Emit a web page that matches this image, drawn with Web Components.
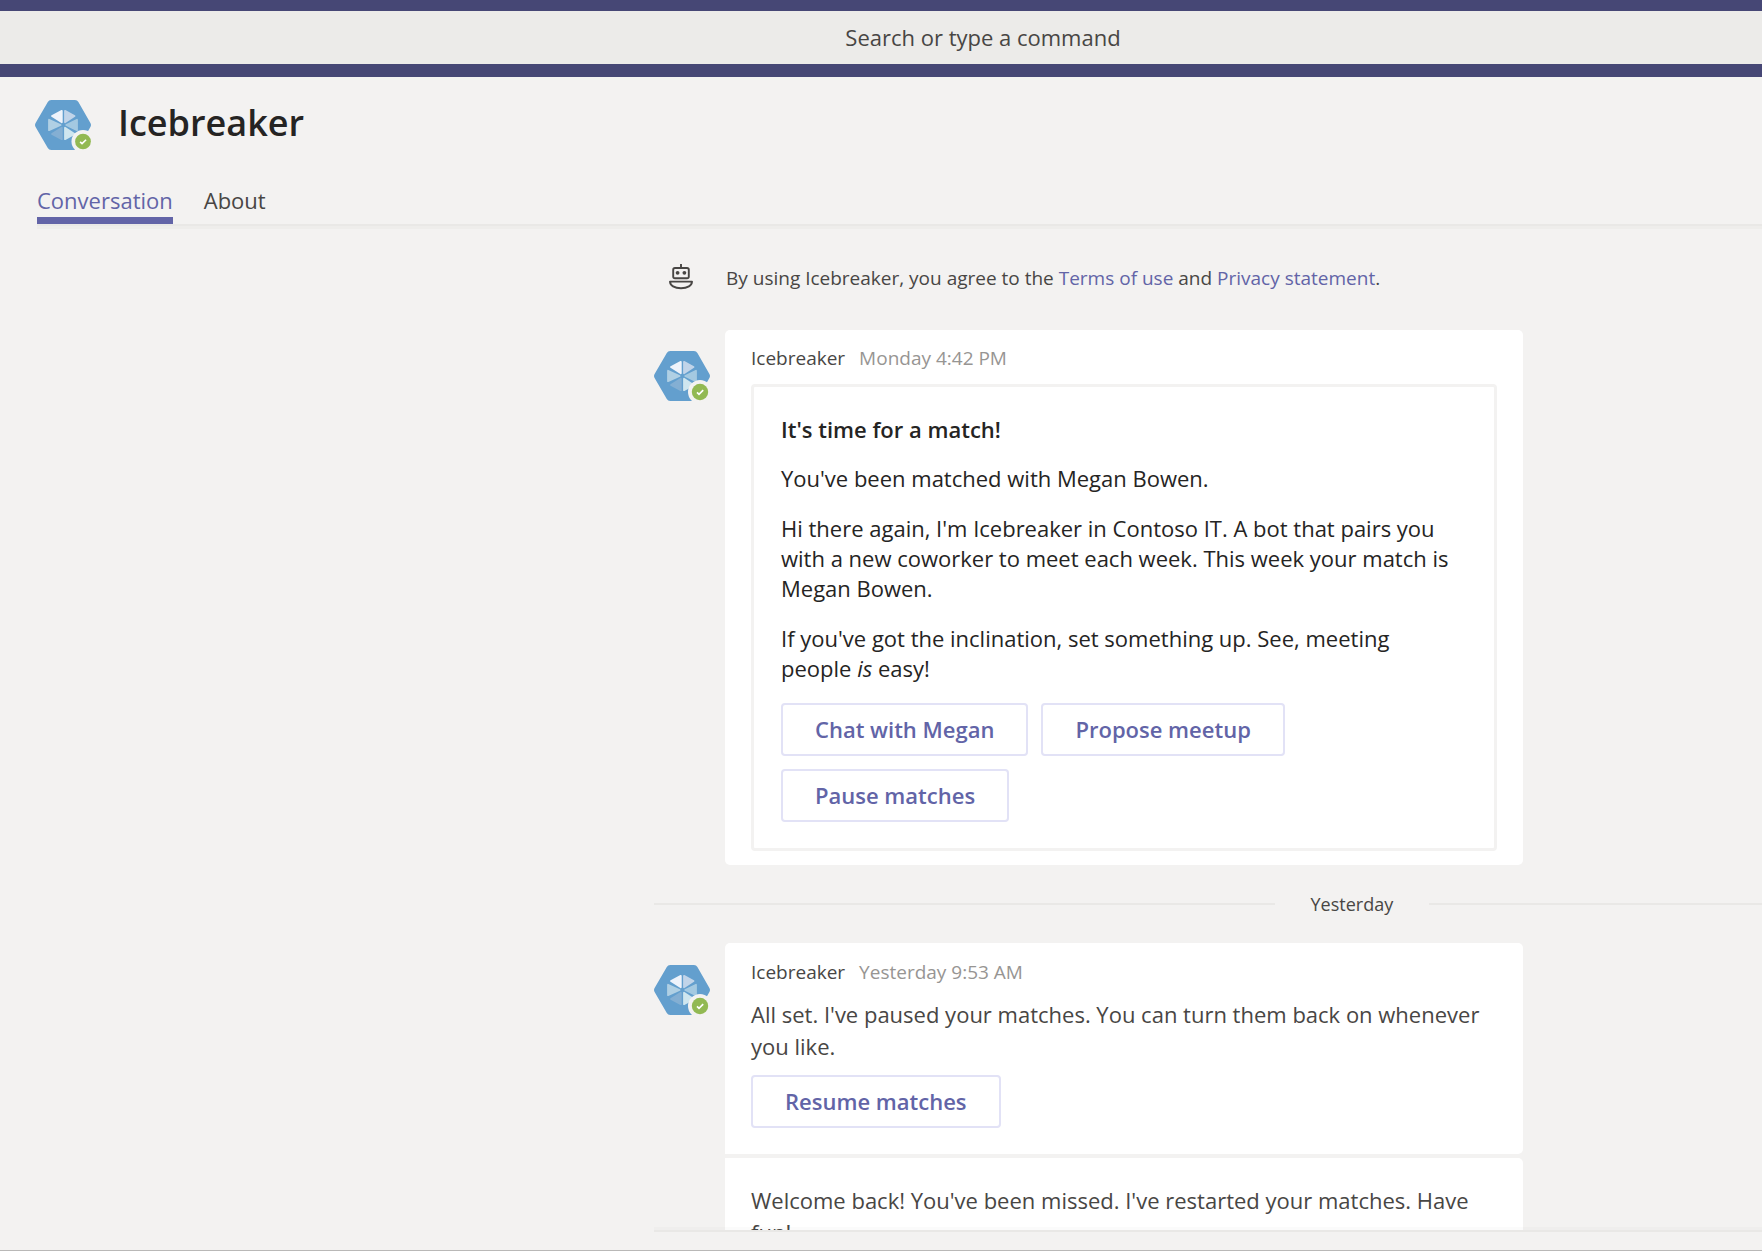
<!DOCTYPE html>
<html lang="en">
<head>
<meta charset="utf-8">
<title>Icebreaker</title>
<style>
  html, body { height: 100%; margin: 0; }
  body {
    --brand: #6264a7;
    --bar: #464775;
    --canvas: #f3f2f1;
    --line: #e9e8e6;
    --line-soft: #eeedeb;
    --ink: #252423;
    --ink-mid: #484644;
    --ink-soft: #979593;
    --body-size: 22px;
    --meta-size: 19px;
    background: var(--canvas);
    color: var(--ink-mid);
    font-family: "Open Sans", "Noto Sans", sans-serif;
    font-size: var(--body-size);
    overflow: hidden;
  }
</style>
</head>
<body>
<chat-app></chat-app>

<script>
const define = (name, html, setup) => {
  const template = document.createElement('template');
  template.innerHTML = html;
  customElements.define(name, class extends HTMLElement {
    constructor() {
      super();
      this.attachShadow({ mode: 'open' }).append(template.content.cloneNode(true));
    }
    connectedCallback() { if (setup) setup(this, this.shadowRoot); }
  });
};

define('bot-avatar', `
  <style>
    :host { display: block; flex: none; width: 56px; height: 50px; }
    svg { display: block; }
  </style>
  <svg width="56" height="50" viewBox="0 0 56 50" role="img" aria-label="Icebreaker, available">
    <path fill="#639fce" d="M16.200 0H40a4 4 0 0 1 3.400 2L55.400 23a4 4 0 0 1 0 4L43.400 48a4 4 0 0 1-3.400 2H16.200a4 4 0 0 1-3.400-2L.6 27a4 4 0 0 1 0-4L12.800 2a4 4 0 0 1 3.400-2z"/>
    <g stroke-width="1.800" stroke-linejoin="round">
      <path fill="#eef3fb" stroke="#eef3fb" d="M26.800 22.200V10.800L17 16z"/>
      <path fill="#c1d4e9" stroke="#c1d4e9" d="M30 22.200V10.800L39.500 16z"/>
      <path fill="#b0d0e4" stroke="#b0d0e4" d="M25.600 25L14 19.800V30.200z"/>
      <path fill="#a4c9e1" stroke="#a4c9e1" d="M31.200 25L42 19.800V30.200z"/>
      <path fill="#84afd3" stroke="#84afd3" d="M26.800 27.800V39.200L17 34z"/>
      <path fill="#cfe6ef" stroke="#cfe6ef" d="M30 27.800V39.200L39.500 34z"/>
    </g>
    <g class="badge" transform="translate(46 41)">
      <circle r="12" fill="#f3f2f1"/>
      <circle r="8.200" fill="#92b953"/>
      <path d="M-3 .4L-1 2.300L3.200-1.800" fill="none" stroke="#fff" stroke-width="1.700"/>
    </g>
  </svg>`, (host, root) => {
    if (host.hasAttribute('edge')) root.querySelector('.badge').setAttribute('transform', 'translate(48 41.500) scale(.96)');
  });

define('bot-glyph', `
  <style>:host { display: block; width: 24px; height: 26px; } svg { display: block; }</style>
  <svg width="24" height="26" viewBox="0 0 24 26" fill="none" stroke="#484644" stroke-width="1.900" aria-hidden="true">
    <path d="M12 0V4"/>
    <rect x="4.200" y="4" width="15.600" height="10.300" rx="1.800"/>
    <path stroke-linejoin="round" d="M1 17.600H23C23 21.500 18.500 24.300 12 24.300S1 21.500 1 17.600z"/>
    <circle cx="8.600" cy="8.800" r="1.900" fill="#484644" stroke="none"/>
    <circle cx="15.400" cy="8.800" r="1.900" fill="#484644" stroke="none"/>
  </svg>`);

define('command-bar', `
  <style>
    :host { display: block; flex: none; background: var(--bar); padding: 11px 0 13px; }
    input {
      display: block; box-sizing: border-box; width: 100%; height: 53px; margin: 0;
      padding: 0 0 2px 204px; border: 0; border-radius: 0; outline: 0;
      background: #ecebe9; color: var(--ink-mid); font: inherit; text-align: center;
    }
    input::placeholder { color: var(--ink-mid); opacity: 1; }
  </style>
  <input type="text" placeholder="Search or type a command" aria-label="Search or type a command">`);

define('nav-tab', `
  <style>
    :host { display: block; }
    a { display: block; line-height: 28px; padding-bottom: 3px; border-bottom: 7px solid transparent; color: var(--ink-mid); text-decoration: none; }
    :host([selected]) a { color: var(--brand); border-color: var(--brand); }
  </style>
  <a href="#"><slot></slot></a>`);

define('app-header', `
  <style>
    :host { display: block; flex: none; padding: 23px 0 0 35px; }
    .title { display: flex; align-items: flex-start; gap: 27px; }
    h1 { margin: 0; font-size: 36px; font-weight: 600; line-height: 46px; color: var(--ink); }
    nav { display: flex; gap: 31px; margin: 36px 0 0 2px; border-bottom: 2px solid var(--line); box-shadow: 0 3px 0 var(--line-soft); }
  </style>
  <div class="title"><bot-avatar edge></bot-avatar><h1>Icebreaker</h1></div>
  <nav><nav-tab selected>Conversation</nav-tab><nav-tab>About</nav-tab></nav>`);

define('action-button', `
  <style>
    :host { display: block; }
    button {
      display: block; box-sizing: border-box; height: 53px; margin: 0; padding: 0 32px 2px;
      border: 2px solid #e2e2f6; border-radius: 4px; background: #fff; color: var(--brand);
      font: inherit; font-weight: 600;
    }
  </style>
  <button type="button"><slot></slot></button>`);

define('terms-notice', `
  <style>
    :host { display: flex; align-items: flex-start; gap: 33px; padding: 38px 0 0 15px; font-size: var(--meta-size); line-height: 28px; }
    a { color: var(--brand); text-decoration: none; }
  </style>
  <bot-glyph></bot-glyph>
  <span>By using Icebreaker, you agree to the <a href="#">Terms of use</a> and <a href="#">Privacy statement</a>.</span>`);

define('chat-message', `
  <style>
    :host { display: flex; align-items: flex-start; gap: 15px; }
    .who { flex: none; width: 56px; padding-top: 21px; }
    article { box-sizing: border-box; flex: 0 1 798px; padding: 16px 26px 14px; border-radius: 5px; background: #fff; }
    header { display: flex; gap: 14px; margin-bottom: 14px; font-size: var(--meta-size); line-height: 24px; }
    time { color: var(--ink-soft); }
    :host([text]) .who { padding-top: 22px; }
    :host([text]) article { padding-top: 17px; padding-bottom: 26px; border-bottom-left-radius: 0; }
    :host([follow]) article { padding-top: 26px; border-top-left-radius: 0; }
    :host([follow]) header, :host([follow]) bot-avatar { display: none; }
  </style>
  <div class="who"><bot-avatar></bot-avatar></div>
  <article>
    <header><span>Icebreaker</span><time></time></header>
    <slot></slot>
  </article>`, (host, root) => {
    root.querySelector('time').textContent = host.getAttribute('when') || '';
  });

define('message-text', `
  <style>
    :host { display: flex; flex-direction: column; align-items: flex-start; gap: 13px; }
    p { margin: 0; line-height: 32px; }
  </style>
  <p><slot></slot></p>
  <slot name="action"></slot>`);

define('match-card', `
  <style>
    :host { display: block; padding: 27px 40px 26px 27px; border: 3px solid #f3f2f1; border-radius: 4px; color: var(--ink); line-height: 30px; }
    h2, p { margin: 0 0 20px; font-size: inherit; }
    h2 { margin-bottom: 19px; font-weight: 600; }
    .actions { display: flex; flex-wrap: wrap; gap: 13px; }
  </style>
  <h2>It's time for a match!</h2>
  <p>You've been matched with Megan Bowen.</p>
  <p>Hi there again, I'm Icebreaker in Contoso IT. A bot that pairs you with a new coworker to meet each week. This week your match is Megan Bowen.</p>
  <p>If you've got the inclination, set something up. See, meeting people <em>is</em> easy!</p>
  <div class="actions">
    <action-button>Chat with Megan</action-button>
    <action-button>Propose meetup</action-button>
    <action-button>Pause matches</action-button>
  </div>`);

define('day-divider', `
  <style>
    :host { display: flex; align-items: center; gap: 36px; height: 78px; font-size: 18px; }
    i { height: 2px; background: var(--line); flex: 619 1 0; }
    i:last-child { flex-grow: 332; }
  </style>
  <i></i><span><slot></slot></span><i></i>`);

define('chat-feed', `
  <style>
    :host { display: grid; grid-template-columns: 655fr 1107fr; flex: 1; min-height: 0; }
    main { grid-column: 2; position: relative; display: flex; flex-direction: column; overflow: hidden; min-height: 0; margin-left: -1px; box-shadow: 0 2px 0 var(--line); }
    main::after { content: ""; position: absolute; inset: auto 0 0 0; height: 3px; background: rgba(37, 36, 35, .02); }
    main > * { flex-shrink: 0; }
    terms-notice { margin-bottom: 38px; }
    chat-message + chat-message { margin-top: 4px; }
  </style>
  <main>
    <terms-notice></terms-notice>
    <chat-message when="Monday 4:42 PM"><match-card></match-card></chat-message>
    <day-divider>Yesterday</day-divider>
    <chat-message text when="Yesterday 9:53 AM">
      <message-text>All set. I've paused your matches. You can turn them back on whenever you like.<action-button slot="action">Resume matches</action-button></message-text>
    </chat-message>
    <chat-message text follow>
      <message-text>Welcome back! You've been missed. I've restarted your matches. Have fun!</message-text>
    </chat-message>
  </main>`);

define('chat-app', `
  <style>
    :host { display: flex; flex-direction: column; height: 100vh; }
    footer { flex: none; height: 20px; border-bottom: 1px solid #b9b8b7; }
  </style>
  <command-bar></command-bar>
  <app-header></app-header>
  <chat-feed></chat-feed>
  <footer></footer>`);
</script>
</body>
</html>
